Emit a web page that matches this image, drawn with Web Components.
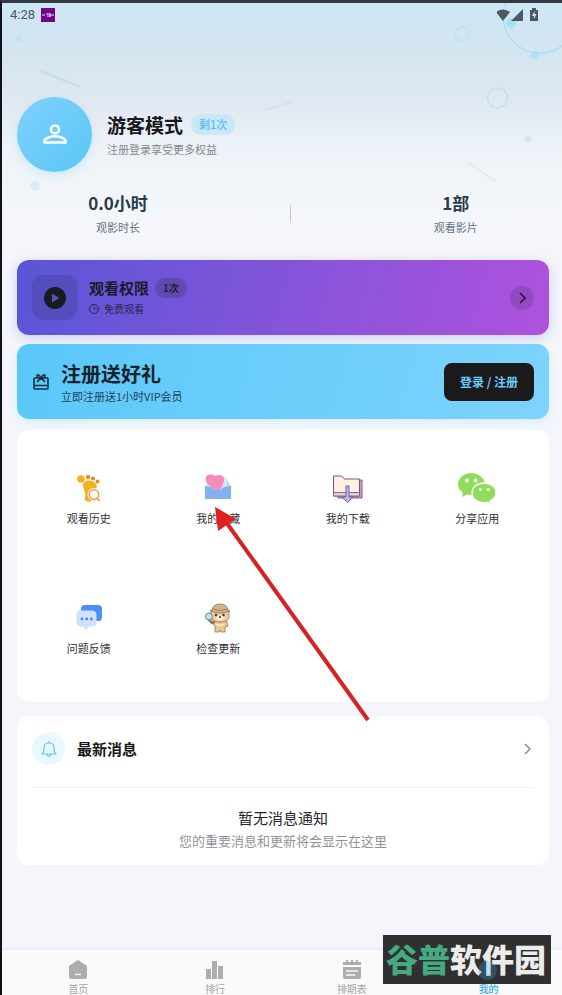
<!DOCTYPE html>
<html lang="zh-CN">
<head>
<meta charset="utf-8">
<meta name="viewport" content="width=device-width, initial-scale=1">
<title>我的</title>
<style>
  body { margin: 0; background: #f4f6fb; font-family: "Noto Sans CJK SC", "Noto Sans", sans-serif; }
</style>
</head>
<body>
<app-screen>
  <status-bar></status-bar>
  <profile-header name="游客模式" badge="剩1次" note="注册登录享受更多权益">
    <stat-item value="0.0小时" label="观影时长"></stat-item>
    <stat-item value="1部" label="观看影片"></stat-item>
  </profile-header>
  <access-card></access-card>
  <signup-card></signup-card>
  <tile-grid>
    <app-tile label="观看历史"><svg width="30" height="30" viewBox="0 0 30 30"><g fill="#f9b01e"><circle cx="7" cy="6" r="3.800"/><path d="M9 13C8 9 13 7 17 8c5 1 7 4 5 8-1 2-3 3-3 6l-1 6c-4 2-8 0-7-4 1-4-1-7-2-11z"/></g><g fill="#ee8a25"><circle cx="14" cy="4" r="2.200"/><circle cx="19" cy="5.500" r="2.100"/><circle cx="23.500" cy="8.500" r="2"/></g><circle cx="20" cy="21.500" r="6.500" fill="#fff"/><circle cx="20" cy="21.500" r="4.800" fill="#fff" stroke="#ee9c45" stroke-width="1.500"/><path d="M23 25l2.500 3" stroke="#ee9c45" stroke-width="1.500"/></svg></app-tile>
    <app-tile label="我的收藏"><svg width="30" height="30" viewBox="0 0 30 30"><path d="M6 4h17l5 10v11H2V14z" fill="#d7e5fa"/><path d="M23 4l5 10v4l-5-3z" fill="#b7d1f6" stroke="#e9f2fd"/><path d="M14 17C7 14 1 9 3 4c2-3 6-3 9-1 4-2 8-1 9 2 1 5-3 9-7 12z" fill="#f48bb9"/><path d="M2 13l6 1 4 3h5l4-3 7-1v13H2z" fill="#83b1ee"/><path d="M8 12l6 4.500 6-4.500-3 5h-5z" fill="#f48bb9"/></svg></app-tile>
    <app-tile label="我的下载"><svg width="30" height="30" viewBox="0 0 30 30"><path d="M4 7h25v18H5z" fill="#c99bc0" stroke="#86608f"/><path d="M.500 3h8l3 3h15v17H.500z" fill="#fff0df" stroke="#79546d"/><path d="M.500 19.500h26v3.500H.500z" fill="#e9ccd7" stroke="#8c6987"/><path d="M13 13h3v11h4l-5.500 5.500L9 24h4z" fill="#bdb7f2" stroke="#7165a5"/></svg></app-tile>
    <app-tile label="分享应用"><svg width="38" height="30" viewBox="0 0 38 30"><g fill="#92dc5c"><path d="M13 0C6 0 0 5 0 11c0 4 2 7 5 9l-1 4 5-2.500c10 3 18-3 18-10.500C27 5 20 0 13 0z"/><path stroke="#fff" stroke-width="1.300" d="M26 10c-7 0-12 4-12 10 0 7 8 11 15 9l4 2-1-3c4-2 6-5 6-8 0-6-5-10-12-10z"/></g><g fill="#fff"><circle cx="9" cy="7.500" r="1.900"/><circle cx="17.500" cy="7.500" r="1.900"/><circle cx="22.500" cy="16.500" r="1.500"/><circle cx="30" cy="16.500" r="1.500"/></g></svg></app-tile>
    <app-tile label="问题反馈"><svg width="30" height="30" viewBox="0 0 30 30"><path d="M11 2h13q4 0 4 4v7q0 4-2 5H7V6q0-4 4-4z" fill="#4b8ff6"/><path d="M7 7.500h11q4.500 0 4.500 4.500v7q0 4.500-4.500 4.500h-3L12 27l-3-3.500H7Q2.500 23.500 2.500 19v-7Q2.500 7.500 7 7.500z" fill="#cfe1fd"/><g fill="#4588ee"><circle cx="8" cy="16" r="1.400"/><circle cx="12.700" cy="16" r="1.400"/><circle cx="17.400" cy="16" r="1.400"/></g></svg></app-tile>
    <app-tile label="检查更新"><svg width="30" height="30" viewBox="0 0 30 30"><g stroke="#8d6849" stroke-width=".700"><path d="M10 16h13l2 7-3 1v5h-4l-1-2-1 2h-4v-6l-4-4z" fill="#ecc794"/><path d="M8 8q9-5 18 0v6q-1 5-9 5t-9-5z" fill="#efcda0"/><path d="M9 7q1-6 8-6t8 6l2 1q-10 4-20 0z" fill="#d3b48d"/><path d="M9 6q8 3 16 0" fill="none"/><path d="M5 16l4 4 3-1" fill="none" stroke-width="2"/></g><ellipse cx="17" cy="15" rx="3.500" ry="2.500" fill="#fff5e3"/><g fill="#4d3024"><circle cx="13" cy="12" r="1.200"/><circle cx="20.500" cy="12" r="1.200"/><circle cx="17" cy="14" r="1"/></g><circle cx="6" cy="13.500" r="3.500" fill="#bfe1ed" stroke="#648796"/><path d="M13 21q4 3 8 0" fill="none" stroke="#fff5e3" stroke-width="1.500"/></svg></app-tile>
  </tile-grid>
  <news-card heading="最新消息">
    <span slot="title">暂无消息通知</span>
    <span slot="text">您的重要消息和更新将会显示在这里</span>
  </news-card>
  <tab-bar slot="tabs">
    <tab-item label="首页"><svg width="20" height="20" viewBox="0 0 20 20"><path d="M10 0l9 6v11q0 2-2 2H3q-2 0-2-2V6z" fill="#adadad"/><path d="M7 14.500h6" stroke="#fff" stroke-width="1.300"/></svg></tab-item>
    <tab-item label="排行"><svg width="20" height="20" viewBox="0 0 20 20"><path d="M1 9h5v10H1zM7 1h5v18H7zM13 6h5v13h-5z" fill="#adadad"/></svg></tab-item>
    <tab-item label="排期表"><svg width="20" height="20" viewBox="0 0 20 20"><path d="M1 2h3V0h2v2h3V0h2v2h3V0h2v2h3v3H1zM1 7h18v10q0 2-2 2H3q-2 0-2-2z" fill="#adadad"/><path d="M4 11h12M4 15h9" stroke="#fafafa" stroke-width="1.300"/></svg></tab-item>
    <tab-item label="我的" active><svg width="20" height="20" viewBox="0 0 20 20"><circle cx="10" cy="10" r="9" fill="#35b4f0"/></svg></tab-item>
  </tab-bar>
  <pointer-arrow slot="overlay"></pointer-arrow>
  <site-mark slot="overlay"><span slot="lead">谷普</span>软件园</site-mark>
</app-screen>

<script>
const define = (name, render) => customElements.define(name, class extends HTMLElement {
  constructor() {
    super();
    this.attachShadow({ mode: 'open' });
  }
  connectedCallback() {
    const t = document.createElement('template');
    t.innerHTML = render(this);
    this.shadowRoot.replaceChildren(t.content.cloneNode(true));
  }
});
const reset = `*{box-sizing:border-box} button,a{font:inherit;color:inherit;border:0;background:none;padding:0;margin:0;text-decoration:none;cursor:pointer} svg{display:block;flex:none}`;

define('app-screen', () => `<style>${reset}
  :host{display:flex;flex-direction:column;box-sizing:border-box;min-height:100vh;position:relative;overflow:hidden;
    border-top:3px solid #353a40;border-left:2px solid #101218;
    background:linear-gradient(#cde7f4 0,#d3e5f0 50px,#dae7ef 80px,#e3eaf3 110px,#ecf2f7 140px,#f1f5f9 180px,#f4f6fb 230px)}
  .decor{position:absolute;top:0;right:0}
  main{flex:1;position:relative;display:flex;flex-direction:column;padding:0 13px 20px 15px}
</style>
<svg class="decor" width="560" height="200" viewBox="2 3 560 200" fill="none" aria-hidden="true">
  <g stroke="#afdef5" stroke-width="1.500"><circle cx="540" cy="16" r="37"/></g>
  <g stroke="#c8dfea" stroke-width="1.500"><circle cx="462.500" cy="34" r="7"/><circle cx="497.500" cy="98" r="10"/></g>
  <g fill="#aadff8"><circle cx="511" cy="23" r="5"/><circle cx="535" cy="55" r="4" opacity=".8"/></g>
  <g fill="#c2e1f0"><circle cx="19" cy="39" r="3"/><circle cx="528" cy="139" r="3" opacity=".7"/><circle cx="35" cy="186" r="5" fill="#dcedf8"/></g>
  <g stroke="#c0d9e8" stroke-width="2"><path d="M41 71l39 16" opacity=".8"/><path d="M265 110l27-8" opacity=".4"/><path d="M469 163l27 19" opacity=".3"/></g>
</svg>
<main><slot></slot></main><slot name="tabs"></slot><slot name="overlay"></slot>`);

define('status-bar', () => `<style>${reset}
  :host{display:flex;align-items:center;gap:6px;height:24px;margin:0 0 0 -7px;font:400 13px/24px Roboto,sans-serif;color:#4b5863}
  .right{margin-left:auto;margin-right:-4px}
</style><span>4:28</span>
<svg width="14" height="14" viewBox="0 0 14 14"><path d="M0 0h14v14H0z" fill="#6d078f"/><path d="M1 7h3M5 6h3M6 8h3M9 5v4M9 7h4" stroke="#f0dff5" stroke-width="1.200"/></svg>
<svg class="right" width="56" height="14" viewBox="0 0 56 14" fill="#4d5962"><path d="M-1 4q7-5 14 0L6 13z"/><path d="M26 1v12H14z"/><path d="M33 2h2V0h4v2h2v11h-8z"/><path d="M37.500 3l-2.500 5h2v3l2.500-5h-2z" fill="#d3e6f1"/></svg>`);

define('profile-header', el => `<style>${reset}
  :host{display:block;padding-top:70px;margin-bottom:22px}
  .who{display:flex;align-items:center;gap:15px}
  .avatar{width:75px;height:75px;border-radius:50%;display:grid;place-items:center;background:linear-gradient(135deg,#7dd2fb,#5bc6f9);box-shadow:0 3px 8px #5bc6f940}
  .name{display:flex;align-items:center;gap:8px}
  h1{margin:0;font-size:19px;line-height:28px;font-weight:700;color:#17191d}
  .badge{font-size:11px;line-height:21px;font-weight:500;color:#5abdec;background:#c9e8f6;border-radius:11px;padding:0 8px}
  p{margin:0;font-size:11px;line-height:20px;color:#84888e}
  .stats{display:flex;justify-content:space-around;align-items:center;margin-top:18px}
  i{width:1px;height:18px;background:#c3c9d0}
</style>
<div class="who"><div class="avatar"><svg width="30" height="30" viewBox="0 0 24 24" fill="none" stroke="#fff" stroke-width="2"><circle cx="12" cy="7.500" r="3.200"/><path d="M3.500 18v-1c0-2 4-4 8.500-4s8.500 2 8.500 4v1z" stroke-linejoin="round"/></svg></div>
<div><div class="name"><h1>${el.getAttribute('name')}</h1><span class="badge">${el.getAttribute('badge')}</span></div><p>${el.getAttribute('note')}</p></div></div>
<div class="stats"><slot name="first"></slot><i></i><slot></slot></div>`);

define('stat-item', el => {
  if (!el.previousElementSibling) el.slot = 'first';
  return `<style>:host{display:block;text-align:center}
  b{display:block;font-size:17px;line-height:26px;font-weight:700;color:#2b3a49}
  span{display:block;font-size:11px;line-height:22px;color:#66717d}</style>
  <b>${el.getAttribute('value')}</b><span>${el.getAttribute('label')}</span>`;
});

define('access-card', () => `<style>${reset}
  :host{display:block;margin-bottom:9px}
  button{width:100%;height:75px;display:flex;align-items:center;gap:12px;padding:0 15px;text-align:left;border-radius:12px;background:linear-gradient(105deg,#5856d6,#af52de);box-shadow:0 3px 12px #5856d640;color:#20202c}
  .icon{width:45px;height:45px;border-radius:11px;background:#1a1a1a26;display:grid;place-items:center}
  .text{flex:1}
  .row{display:flex;align-items:center;gap:6px}
  b{font-size:15px;line-height:22px;font-weight:700;color:#1c1a29}
  .badge{font-size:10px;line-height:20px;font-weight:700;padding:0 8px;border-radius:10px;background:#1a1a1a33}
  .sub{display:flex;align-items:center;gap:5px;font-size:10px;line-height:20px;color:#2b2447}
  .go{width:24px;height:24px;border-radius:50%;background:#1a1a1a26;display:grid;place-items:center}
</style><button type="button">
<span class="icon"><svg width="22" height="22" viewBox="0 0 22 22"><circle cx="11" cy="11" r="11" fill="#191b23"/><path d="M8 6.500l7.500 4.500L8 15.500z" fill="#5751b5"/></svg></span>
<span class="text"><span class="row"><b>观看权限</b><span class="badge">1次</span></span>
<span class="sub"><svg width="10" height="10" viewBox="0 0 10 10" fill="none" stroke="#2b2447"><circle cx="5" cy="5" r="4.500"/><path d="M5 2v3h3" stroke-width=".800"/></svg>免费观看</span></span>
<span class="go"><svg width="12" height="12" viewBox="0 0 12 12" fill="none" stroke="#2b1a35" stroke-width="1.700"><path d="M4 1l5 5-5 5"/></svg></span></button>`);

define('signup-card', () => `<style>${reset}
  :host{display:flex;align-items:center;gap:11px;height:75px;box-sizing:border-box;padding:0 15px;margin-bottom:11px;border-radius:12px;background:linear-gradient(105deg,#5ac8fa,#7dd3fc);box-shadow:0 3px 9px #5ac8fa30}
  .text{flex:1}
  h2{margin:0;font-size:20px;line-height:29px;font-weight:700;color:#18212a}
  p{margin:0;font-size:11px;line-height:16px;color:#234151}
  button{height:38px;padding:0 16px;border-radius:8px;background:#1a1a1a;color:#67cbf8;font-size:12px;font-weight:700}
</style><svg width="18" height="18" viewBox="0 0 18 18" fill="none" stroke="#18313e" stroke-width="1.600"><rect x="2" y="5" width="14" height="11" rx="1"/><path d="M2 12.500h14M5 9l4-4 4 4M9 5C7 1 5 1 5 3s2 2 4 2c2 0 4 0 4-2s-2-2-4 2"/></svg>
<div class="text"><h2>注册送好礼</h2><p>立即注册送1小时VIP会员</p></div><button type="button">登录 / 注册</button>`);

define('tile-grid', () => `<style>
  :host{display:grid;grid-template-columns:repeat(4,1fr);padding:5px 7px 8px;margin-bottom:14px;border-radius:12px;background:#fff}
</style><slot></slot>`);

define('app-tile', el => `<style>${reset}
  :host{display:block;aspect-ratio:1}
  button{width:100%;height:100%;display:flex;flex-direction:column;align-items:center;justify-content:center;gap:7px;font-size:11px;line-height:16px;color:#303236}
</style><button type="button"><slot></slot><span>${el.getAttribute('label')}</span></button>`);

define('news-card', el => `<style>${reset}
  :host{display:block;padding:15px 15px 13px;border-radius:12px;background:#fff}
  .head{width:100%;display:flex;align-items:center;gap:12px;padding:1px 0 22px;border-bottom:1px solid #f1f2f4}
  .bell{width:33px;height:33px;border-radius:50%;background:#e9f8fe;display:grid;place-items:center}
  b{flex:1;text-align:left;font-size:15px;line-height:22px;font-weight:700;color:#191a1c}
  .empty{text-align:center;padding-top:18px}
  .t{font-size:15px;line-height:24px;color:#25272a}
  .d{font-size:13px;line-height:22px;color:#909398}
</style><button class="head" type="button"><span class="bell"><svg width="18" height="18" viewBox="0 0 18 18" fill="none" stroke="#68c4e8" stroke-width="1.200" stroke-linejoin="round"><path d="M2 14c2-1 2-3 2-6s2-5 5-5 5 2 5 5 0 5 2 6zM9 1v2M7 14.500q2 4 4 0"/></svg></span><b>${el.getAttribute('heading')}</b>
<svg width="14" height="14" viewBox="0 0 14 14" fill="none" stroke="#888c91" stroke-width="1.500"><path d="M5 2l5 5-5 5"/></svg></button>
<div class="empty"><div class="t"><slot name="title"></slot></div><div class="d"><slot name="text"></slot></div></div>`);

define('tab-bar', () => `<style>
  :host{display:flex;height:45px;box-sizing:border-box;padding:10px 5px 0 8px;background:#fafafb;box-shadow:0 -1px 5px #20305012;position:relative}
</style><slot></slot>`);

define('tab-item', el => `<style>${reset}
  :host{flex:1;display:block;color:#a5a5a5}
  :host([active]){color:#35aee8;font-weight:500}
  a{display:flex;flex-direction:column;align-items:center;gap:3px;font-size:10px;line-height:12px}
</style><a href="#"><slot></slot><span>${el.getAttribute('label')}</span></a>`);

define('pointer-arrow', () => `<style>
  :host{position:absolute;left:211px;top:502px;pointer-events:none} svg{display:block}
</style><svg width="160" height="220" viewBox="213 505 160 220" aria-hidden="true"><path d="M226 522L368 720" stroke="#d42322" stroke-width="4"/><path d="M215 507l21 12-18 12z" fill="#dd2120"/></svg>`);

define('site-mark', () => `<style>
  :host{position:absolute;right:11px;bottom:11px;box-sizing:border-box;display:flex;align-items:center;height:49px;padding:0 5px 3px 3px;background:#303030;color:#ececec;font-size:32px;line-height:46px;font-weight:900;font-style:oblique 8deg;white-space:nowrap}
  .lead{color:#45a981}
  i{position:absolute;left:95px;top:26px;width:19px;height:19px;border-radius:50%;background:#35b4f040}
</style><span class="lead"><slot name="lead"></slot></span><span><slot></slot></span><i></i>`);
</script>
</body>
</html>
